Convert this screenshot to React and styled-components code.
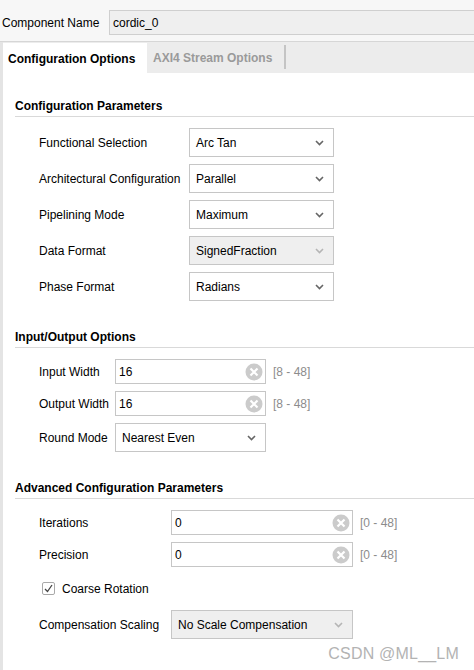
import styled, { createGlobalStyle } from "styled-components";

const Global = createGlobalStyle`
  html, body { margin: 0; padding: 0; background: #ffffff; }
  body {
    font-family: "Liberation Sans", Arial, sans-serif;
    font-size: 12px;
    color: #000;
    overflow: hidden;
  }
`;

const Page = styled.div`
  position: relative;
  width: 474px;
  height: 670px;
  overflow: hidden;
  background: #fff;
`;

const Header = styled.div`
  height: 42px;
  display: flex;
  align-items: center;
  padding: 4px 0 0 2px;
  background: #f7f7f7;
  border-bottom: 1px solid #d6d6d6;
  box-sizing: border-box;
`;

const HeaderLabel = styled.span`
  width: 107px;
  font-size: 12px;
`;

const NameInput = styled.div`
  flex: 1;
  height: 25px;
  margin-right: -4px;
  box-sizing: border-box;
  background: #efefef;
  border: 1px solid #cfcfcf;
  display: flex;
  align-items: center;
  padding-left: 3px;
`;

const Frame = styled.div`
  border-left: 3px solid #e4e4e4;
  height: 628px;
  box-sizing: border-box;
`;

const TabBar = styled.div`
  height: 31px;
  background: #ececec;
  display: flex;
  align-items: stretch;
  padding-top: 1px;
  box-sizing: border-box;
`;

const Tab = styled.div`
  width: ${({ w }) => w}px;
  display: flex;
  align-items: center;
  padding-left: ${({ pl }) => pl}px;
  padding-top: 2px;
  box-sizing: border-box;
  font-weight: bold;
  font-size: 12px;
  color: ${({ active }) => (active ? "#000" : "#9a9a9a")};
  background: ${({ active }) => (active ? "#fff" : "transparent")};
  border-right: ${({ sep }) => (sep ? "2px solid #c4c4c4" : "none")};
  margin: ${({ sep }) => (sep ? "2px 0 4px" : "0")};
`;

const Content = styled.div`
  padding: 23px 0 0 12px;
`;

const Section = styled.div`
  & + & {
    margin-top: 26px;
  }
`;

const SectionTitle = styled.div`
  height: 20px;
  line-height: 20px;
  font-weight: bold;
  font-size: 12px;
  border-bottom: 1px solid #d9d9d9;
  margin-bottom: 11px;
`;

const Rows = styled.div`
  display: flex;
  flex-direction: column;
  gap: 7px;
  padding-left: 24px;
`;

const Row = styled.div`
  display: flex;
  align-items: center;
  height: ${({ h }) => h || 29}px;
`;

const Label = styled.div`
  width: ${({ w }) => w}px;
  flex-shrink: 0;
  white-space: nowrap;
`;

const SelectBox = styled.div`
  width: ${({ w }) => w}px;
  height: 29px;
  box-sizing: border-box;
  border: 1px solid #c6c6c6;
  background: ${({ disabled }) => (disabled ? "#efefef" : "#fff")};
  display: flex;
  align-items: center;
  justify-content: space-between;
  padding: 0 9px 0 6px;
`;

const InputBox = styled.div`
  width: ${({ w }) => w}px;
  height: 25px;
  box-sizing: border-box;
  border: 1px solid #c6c6c6;
  background: #fff;
  display: flex;
  align-items: center;
  justify-content: space-between;
  padding: 0 2px 0 3px;
`;

const Range = styled.span`
  margin-left: 7px;
  color: #8c8c8c;
`;

const CheckRow = styled.label`
  display: flex;
  align-items: center;
  height: 15px;
  padding-left: 3px;
  margin: 14px 0 7px;
  gap: 7px;
`;

const Box = styled.span`
  width: 13px;
  height: 13px;
  box-sizing: border-box;
  border: 1px solid #a9a9a9;
  border-radius: 2px;
  background: #fff;
  display: flex;
  align-items: center;
  justify-content: center;
`;

const Watermark = styled.div`
  position: absolute;
  right: 15px;
  top: 645px;
  font-size: 16px;
  color: #b3b3b3;
  letter-spacing: 0.2px;
`;

const Chevron = ({ light }) => (
  <svg width="9" height="6" viewBox="0 0 9 6">
    <path d="M1 1 L4.5 4.5 L8 1" fill="none" stroke={light ? "#b5b5b5" : "#666"} strokeWidth="1.6" />
  </svg>
);

const ClearIcon = () => (
  <svg width="18" height="18" viewBox="0 0 18 18">
    <circle cx="9" cy="9" r="8.5" fill="#cbcbcb" />
    <path d="M5.5 5.5 L12.5 12.5 M12.5 5.5 L5.5 12.5" stroke="#fff" strokeWidth="2.2" />
  </svg>
);

const Select = ({ w, value, disabled }) => (
  <SelectBox w={w} disabled={disabled}>
    <span>{value}</span>
    <Chevron light={disabled} />
  </SelectBox>
);

const NumInput = ({ w, value, range }) => (
  <>
    <InputBox w={w}>
      <span>{value}</span>
      <ClearIcon />
    </InputBox>
    <Range>{range}</Range>
  </>
);

const config = [
  ["Functional Selection", "Arc Tan"],
  ["Architectural Configuration", "Parallel"],
  ["Pipelining Mode", "Maximum"],
  ["Data Format", "SignedFraction", true],
  ["Phase Format", "Radians"],
];

export default function App() {
  return (
    <Page>
      <Global />
      <Header>
        <HeaderLabel>Component Name</HeaderLabel>
        <NameInput>cordic_0</NameInput>
      </Header>
      <Frame>
        <TabBar>
          <Tab active w={144} pl={5}>Configuration Options</Tab>
          <Tab sep w={139} pl={6}>AXI4 Stream Options</Tab>
        </TabBar>
        <Content>
          <Section>
            <SectionTitle>Configuration Parameters</SectionTitle>
            <Rows>
              {config.map(([label, value, disabled]) => (
                <Row key={label}>
                  <Label w={150}>{label}</Label>
                  <Select w={145} value={value} disabled={disabled} />
                </Row>
              ))}
            </Rows>
          </Section>
          <Section>
            <SectionTitle>Input/Output Options</SectionTitle>
            <Rows>
              <Row h={25}>
                <Label w={76}>Input Width</Label>
                <NumInput w={151} value="16" range="[8 - 48]" />
              </Row>
              <Row h={25}>
                <Label w={76}>Output Width</Label>
                <NumInput w={151} value="16" range="[8 - 48]" />
              </Row>
              <Row>
                <Label w={76}>Round Mode</Label>
                <Select w={151} value="Nearest Even" />
              </Row>
            </Rows>
          </Section>
          <Section>
            <SectionTitle>Advanced Configuration Parameters</SectionTitle>
            <Rows>
              <Row h={25}>
                <Label w={132}>Iterations</Label>
                <NumInput w={182} value="0" range="[0 - 48]" />
              </Row>
              <Row h={25}>
                <Label w={132}>Precision</Label>
                <NumInput w={182} value="0" range="[0 - 48]" />
              </Row>
            </Rows>
            <Rows>
              <CheckRow>
                <Box>
                  <svg width="9" height="9" viewBox="0 0 9 9">
                    <path d="M1 5 L3.5 7.5 L8 1" fill="none" stroke="#444" strokeWidth="1.3" />
                  </svg>
                </Box>
                Coarse Rotation
              </CheckRow>
              <Row>
                <Label w={132}>Compensation Scaling</Label>
                <Select w={182} value="No Scale Compensation" disabled />
              </Row>
            </Rows>
          </Section>
        </Content>
      </Frame>
      <Watermark>CSDN @ML__LM</Watermark>
    </Page>
  );
}
